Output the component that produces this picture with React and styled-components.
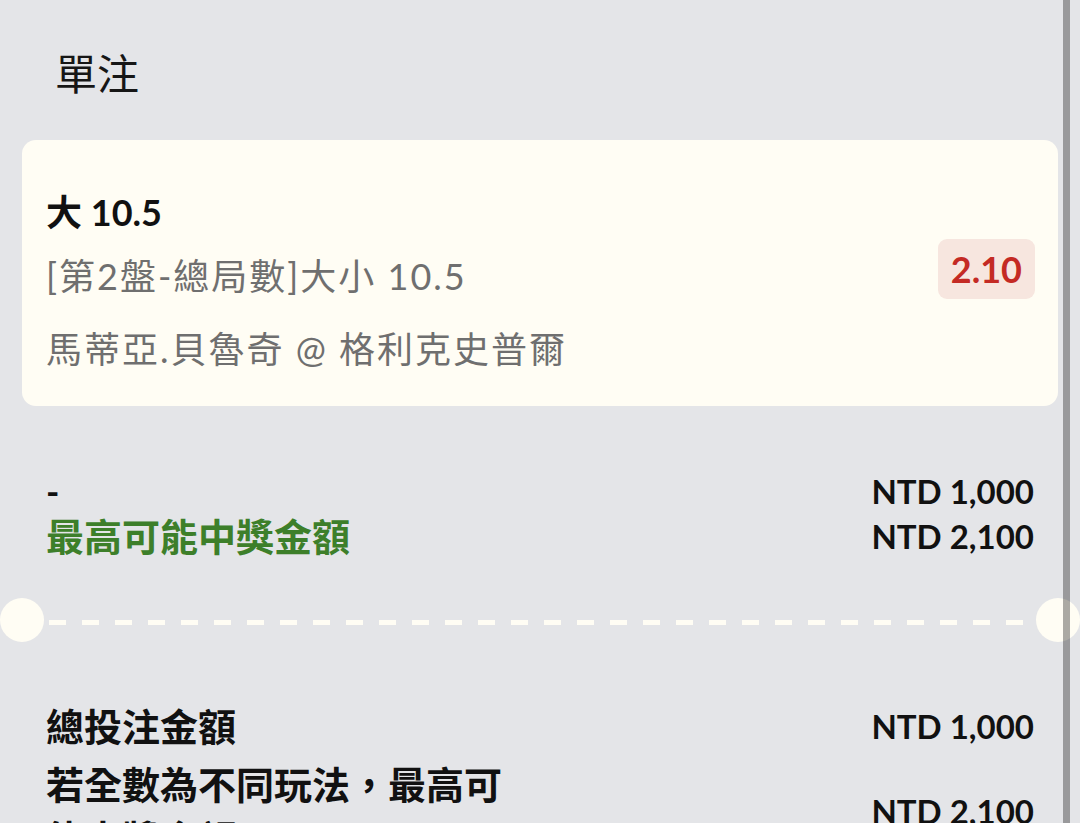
import React from "react";
import styled, { createGlobalStyle } from "styled-components";

const GlobalStyle = createGlobalStyle`
  html, body {
    margin: 0;
    padding: 0;
    background: #e4e5e8;
  }
  body {
    font-family: Lato, "Noto Sans CJK TC", sans-serif;
    color: #141414;
  }
`;

const bet = {
  selection: "大 10.5",
  market: "[第2盤-總局數]大小 10.5",
  event: "馬蒂亞.貝魯奇 @ 格利克史普爾",
  odds: "2.10",
};

const App = () => {
  return (
    <Page>
      <GlobalStyle />
      <Header>單注</Header>

      <Card>
        <CardInfo>
          <Selection>{bet.selection}</Selection>
          <Market>{bet.market}</Market>
          <Event>{bet.event}</Event>
        </CardInfo>
        <Odds>{bet.odds}</Odds>
      </Card>

      <Summary>
        <Row>
          <Label>-</Label>
          <Amount>NTD 1,000</Amount>
        </Row>
        <Row>
          <Label color="#3d7f2a" size="38px">最高可能中獎金額</Label>
          <Amount>NTD 2,100</Amount>
        </Row>
      </Summary>

      <Divider>
        <Hole />
        <Dashes />
        <Hole />
      </Divider>

      <Totals>
        <Row>
          <Label size="38px">總投注金額</Label>
          <Amount>NTD 1,000</Amount>
        </Row>
        <Row gap="8px">
          <Label size="38px" wrap="true">
            若全數為不同玩法，最高可能中獎金額
          </Label>
          <Amount>NTD 2,100</Amount>
        </Row>
      </Totals>

      <ScrollThumb />
    </Page>
  );
};

export default App;

const Page = styled.div`
  position: relative;
  width: 1080px;
  height: 823px;
  overflow: hidden;
  background: #e4e5e8;
`;

const ScrollThumb = styled.div`
  position: absolute;
  top: 0;
  bottom: 0;
  right: 10px;
  width: 7px;
  background: rgba(0, 0, 0, 0.33);
  z-index: 2;
`;

const Header = styled.h1`
  margin: 0;
  padding: 44px 0 0 55px;
  height: 60px;
  line-height: 60px;
  font-size: 42px;
  font-weight: 400;
  color: #161616;
`;

const Card = styled.div`
  margin: 36px 22px 0;
  padding: 44px 23px 31px 24px;
  display: flex;
  align-items: center;
  justify-content: space-between;
  background: #fffdf4;
  border-radius: 14px;
`;

const CardInfo = styled.div`
  display: flex;
  flex-direction: column;
`;

const Selection = styled.div`
  font-size: 36px;
  line-height: 56px;
  font-weight: 700;
  color: #111;
`;

const Market = styled.div`
  margin-top: 10px;
  font-size: 36px;
  line-height: 52px;
  letter-spacing: 2px;
  color: #6f6f6f;
`;

const Event = styled(Market)`
  margin-top: 21px;
`;

const Odds = styled.div`
  height: 60px;
  padding: 0 13px;
  margin-bottom: 22px;
  display: flex;
  align-items: center;
  border-radius: 9px;
  background: #f7e6df;
  color: #c42a24;
  font-size: 36px;
  font-weight: 700;
`;

const Summary = styled.div`
  padding: 63px 46px 0;
  display: flex;
  flex-direction: column;
`;

const Row = styled.div`
  display: flex;
  align-items: center;
  justify-content: space-between;
  margin-top: ${({ gap }) => gap || "0"};
`;

const Label = styled.div`
  font-size: ${({ size }) => size || "36px"};
  line-height: ${({ wrap }) => (wrap ? "54px" : "45px")};
  font-weight: 700;
  color: ${({ color }) => color || "#111"};
  max-width: ${({ wrap }) => (wrap ? "480px" : "none")};
`;

const Amount = styled.div`
  font-size: 33px;
  line-height: 45px;
  font-weight: 700;
  color: #111;
  white-space: nowrap;
`;

const Divider = styled.div`
  margin-top: 39px;
  height: 44px;
  display: flex;
  align-items: center;
`;

const Hole = styled.div`
  width: 44px;
  height: 44px;
  flex: none;
  border-radius: 50%;
  background: #fffdf4;
`;

const Dashes = styled.div`
  flex: 1;
  height: 5px;
  margin: 4px 5px 0;
  background: repeating-linear-gradient(
    to right,
    #fffdf4 0 17px,
    transparent 17px 33px
  );
`;

const Totals = styled.div`
  padding: 62px 46px 0;
  display: flex;
  flex-direction: column;
`;
